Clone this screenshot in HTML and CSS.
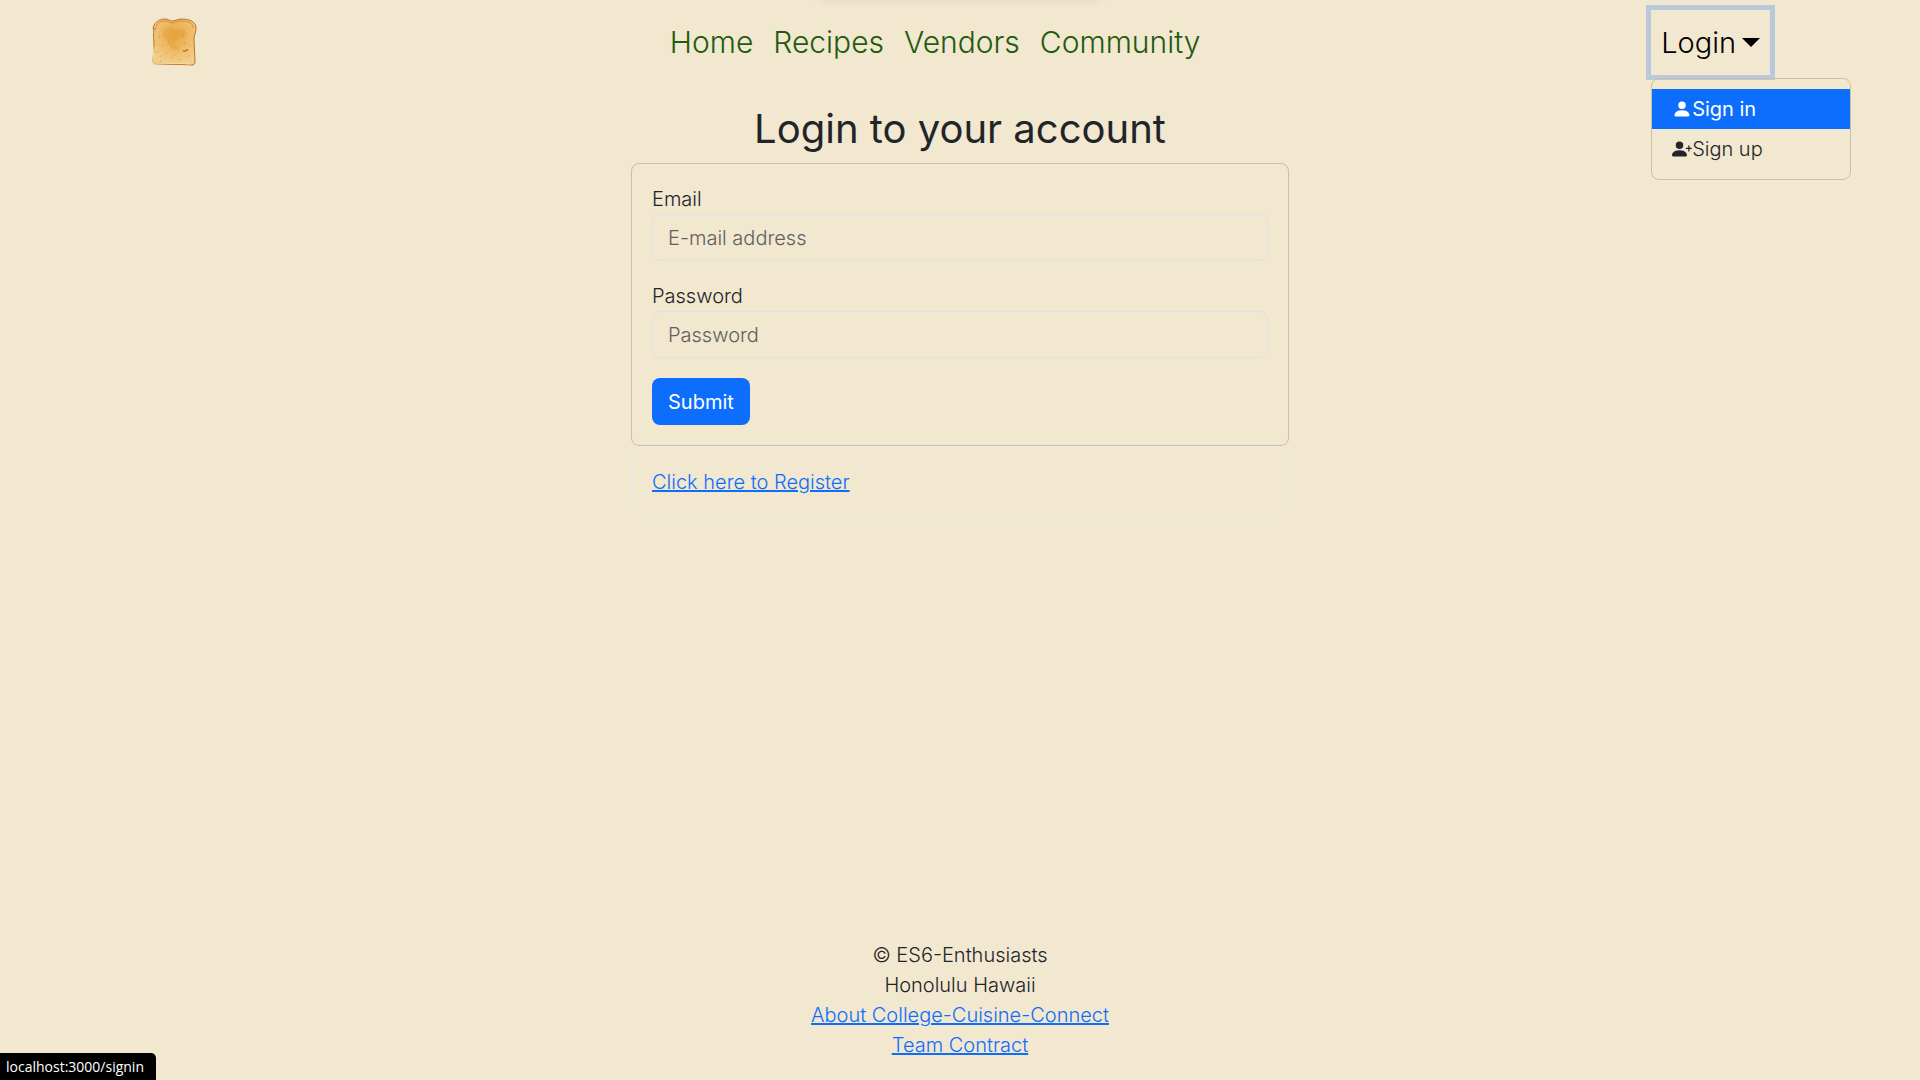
FILE: index.html
```html
<!DOCTYPE html>
<html lang="en">
<head>
<meta charset="utf-8">
<meta name="viewport" content="width=device-width, initial-scale=1">
<title>College Cuisine Connect</title>
<link rel="stylesheet" href="styles.css">
</head>
<body>
<div class="top-shadow"></div>
<header class="navbar">
  <a class="brand" href="#" aria-label="College Cuisine Connect">
    <svg width="49" height="50" viewBox="0 0 49 50" aria-hidden="true">
      <defs>
        <radialGradient id="crumb" cx="52%" cy="34%" r="65%">
          <stop offset="0" stop-color="#e8a845"/>
          <stop offset=".45" stop-color="#edb761"/>
          <stop offset="1" stop-color="#f3cd88"/>
        </radialGradient>
      </defs>
      <path d="M3 11C4 3 11 1 15 1c3 0 5 2 7 2 3 0 5-2 10-2 8 0 14 3 14 9 0 5-2 7-2 11l1 23c0 2-1 3-3 3-12-1-25 0-36-1-2 0-3-1-3-3l1-15c0-6-1-9 0-18z" fill="url(#crumb)" stroke="#bd7527" stroke-width="1"/>
      <path d="M5 12C6 5 11 3 15 3c3 0 5 2 8 2 3-1 5-2 9-2 6 0 11 2 11 7" fill="none" stroke="#d4913b" stroke-width="1"/>
      <path d="M4 29l-1 15c0 2 1 2 3 2 11 0 23-1 35 0" fill="none" stroke="#f8dda5" stroke-width="1"/>
      <path d="M13 12l8-3 5 3 6-2 5 5-3 5-7 1-3 5 5 3-5 4-4-4-2-6-6-5z" fill="#e09a34" opacity=".4"/>
      <path d="M7 34h1M11 38h1M16 35h1M21 40h1M12 28h1M24 37h1M29 42h1M9 19h1M34 25h1M18 24h1M38 38h1M27 31h1M33 17h1M10 43h1" stroke="#bf7724" stroke-width="1" opacity=".7"/>
      <path d="M33 33h3M36 32h2" stroke="#8a4710" stroke-width="1"/>
    </svg>
  </a>
  <nav class="links" aria-label="Main">
    <a href="#">Home</a>
    <a href="#">Recipes</a>
    <a href="#">Vendors</a>
    <a href="#">Community</a>
  </nav>
  <div class="dropdown">
    <button class="toggle" type="button" aria-expanded="true">Login<span class="caret"></span></button>
    <div class="menu">
      <a class="item active" href="#">
        <svg width="20" height="20" viewBox="0 0 16 16" fill="currentColor" aria-hidden="true"><path d="M3 14s-1 0-1-1 1-4 6-4 6 3 6 4-1 1-1 1zm5-6a3 3 0 1 0 0-6 3 3 0 0 0 0 6"/></svg>Sign in</a>
      <a class="item" href="#">
        <svg width="20" height="20" viewBox="0 0 16 16" fill="currentColor" aria-hidden="true"><path d="M1 14s-1 0-1-1 1-4 6-4 6 3 6 4-1 1-1 1zm5-6a3 3 0 1 0 0-6 3 3 0 0 0 0 6"/><path fill-rule="evenodd" d="M13.500 5a.5.5 0 0 1 .5.5V7h1.500a.5.5 0 0 1 0 1H14v1.500a.5.5 0 0 1-1 0V8h-1.500a.5.5 0 0 1 0-1H13V5.500a.5.5 0 0 1 .5-.5"/></svg>Sign up</a>
    </div>
  </div>
</header>
<main class="login">
  <h1>Login to your account</h1>
  <form class="card">
    <div class="field">
      <label for="email">Email</label>
      <input id="email" type="email" placeholder="E-mail address">
    </div>
    <div class="field">
      <label for="password">Password</label>
      <input id="password" type="password" placeholder="Password">
    </div>
    <button class="submit" type="button">Submit</button>
  </form>
  <div class="card register"><a href="#">Click here to Register</a></div>
</main>
<footer class="footer">
  <div>© ES6-Enthusiasts</div>
  <div>Honolulu Hawaii</div>
  <div><a href="#">About College-Cuisine-Connect</a></div>
  <div><a href="#">Team Contract</a></div>
</footer>
<div class="status">localhost:3000/signin</div>
</body>
</html>
```
FILE: styles.css
```css
* { box-sizing: border-box; }

body {
  margin: 0;
  min-height: 100vh;
  display: flex;
  flex-direction: column;
  background: #f2e7cf;
  color: #212529;
  font-family: Inter, "Open Sans", sans-serif;
  font-size: 20px;
  font-weight: 300;
  line-height: 30px;
}

a { color: #0d6efd; text-decoration-thickness: 2px; }

input, button { font: inherit; }

.top-shadow {
  position: absolute;
  top: -10px;
  left: 50%;
  width: 280px;
  height: 10px;
  transform: translateX(-50%);
  box-shadow: 0 0 10px rgba(0, 0, 0, .08);
}

.navbar {
  width: 100%;
  max-width: 1650px;
  margin: 0 auto;
  padding: 10px 15px;
  display: flex;
  align-items: center;
  justify-content: space-between;
}

.brand { margin-right: 20px; }
.brand svg { display: block; }

.links { display: flex; }

.links a {
  padding: 0 10px;
  color: #225b0e;
  font-size: 30px;
  line-height: 45px;
  text-decoration: none;
}

.dropdown { position: relative; }

.toggle {
  display: flex;
  align-items: center;
  gap: 6px;
  padding: 10px;
  border: 0;
  background: none;
  color: #000;
  font-size: 29px;
  line-height: 45px;
  box-shadow: 0 0 0 5px #b9c9d9;
}

.caret {
  border-top: 9px solid;
  border-left: 9px solid transparent;
  border-right: 9px solid transparent;
}

.menu {
  position: absolute;
  top: 100%;
  left: 0;
  width: 200px;
  margin-top: 3px;
  padding: 10px 0;
  border: 1px solid #cabfa9;
  border-radius: 8px;
}

.item {
  display: flex;
  align-items: center;
  padding: 5px 20px;
  color: #212529;
  text-decoration: none;
}

.item.active { background: #0d6efd; color: #fff; font-weight: 400; }

.login {
  width: 100%;
  max-width: 658px;
  margin: 0 auto;
}

h1 {
  margin: 20px 0 10px;
  font-size: 40px;
  font-weight: 400;
  line-height: 48px;
  text-align: center;
}

.card {
  padding: 20px;
  border: 1px solid #cabfa9;
  border-radius: 8px;
}

.field { margin-bottom: 20px; }

.field label { display: block; }

.field input {
  display: block;
  width: 100%;
  height: 47px;
  padding: 0 15px;
  border: 1px solid #dee2e6;
  border-radius: 8px;
  background: none;
}

.field input::placeholder { color: #5f6062; opacity: 1; }

.submit {
  display: block;
  height: 47px;
  padding: 0 16px;
  border: 0;
  border-radius: 8px;
  background: #0d6efd;
  color: #fff;
  font-weight: 400;
}

.register { border-color: #e9ebec; }

.footer {
  margin-top: auto;
  padding-bottom: 20px;
  text-align: center;
}

.status {
  position: fixed;
  left: 0;
  bottom: 0;
  padding: 0 12px 0 6px;
  border-top-right-radius: 5px;
  background: #000;
  color: #fff;
  font: 14px/27px "Open Sans", sans-serif;
}
```
